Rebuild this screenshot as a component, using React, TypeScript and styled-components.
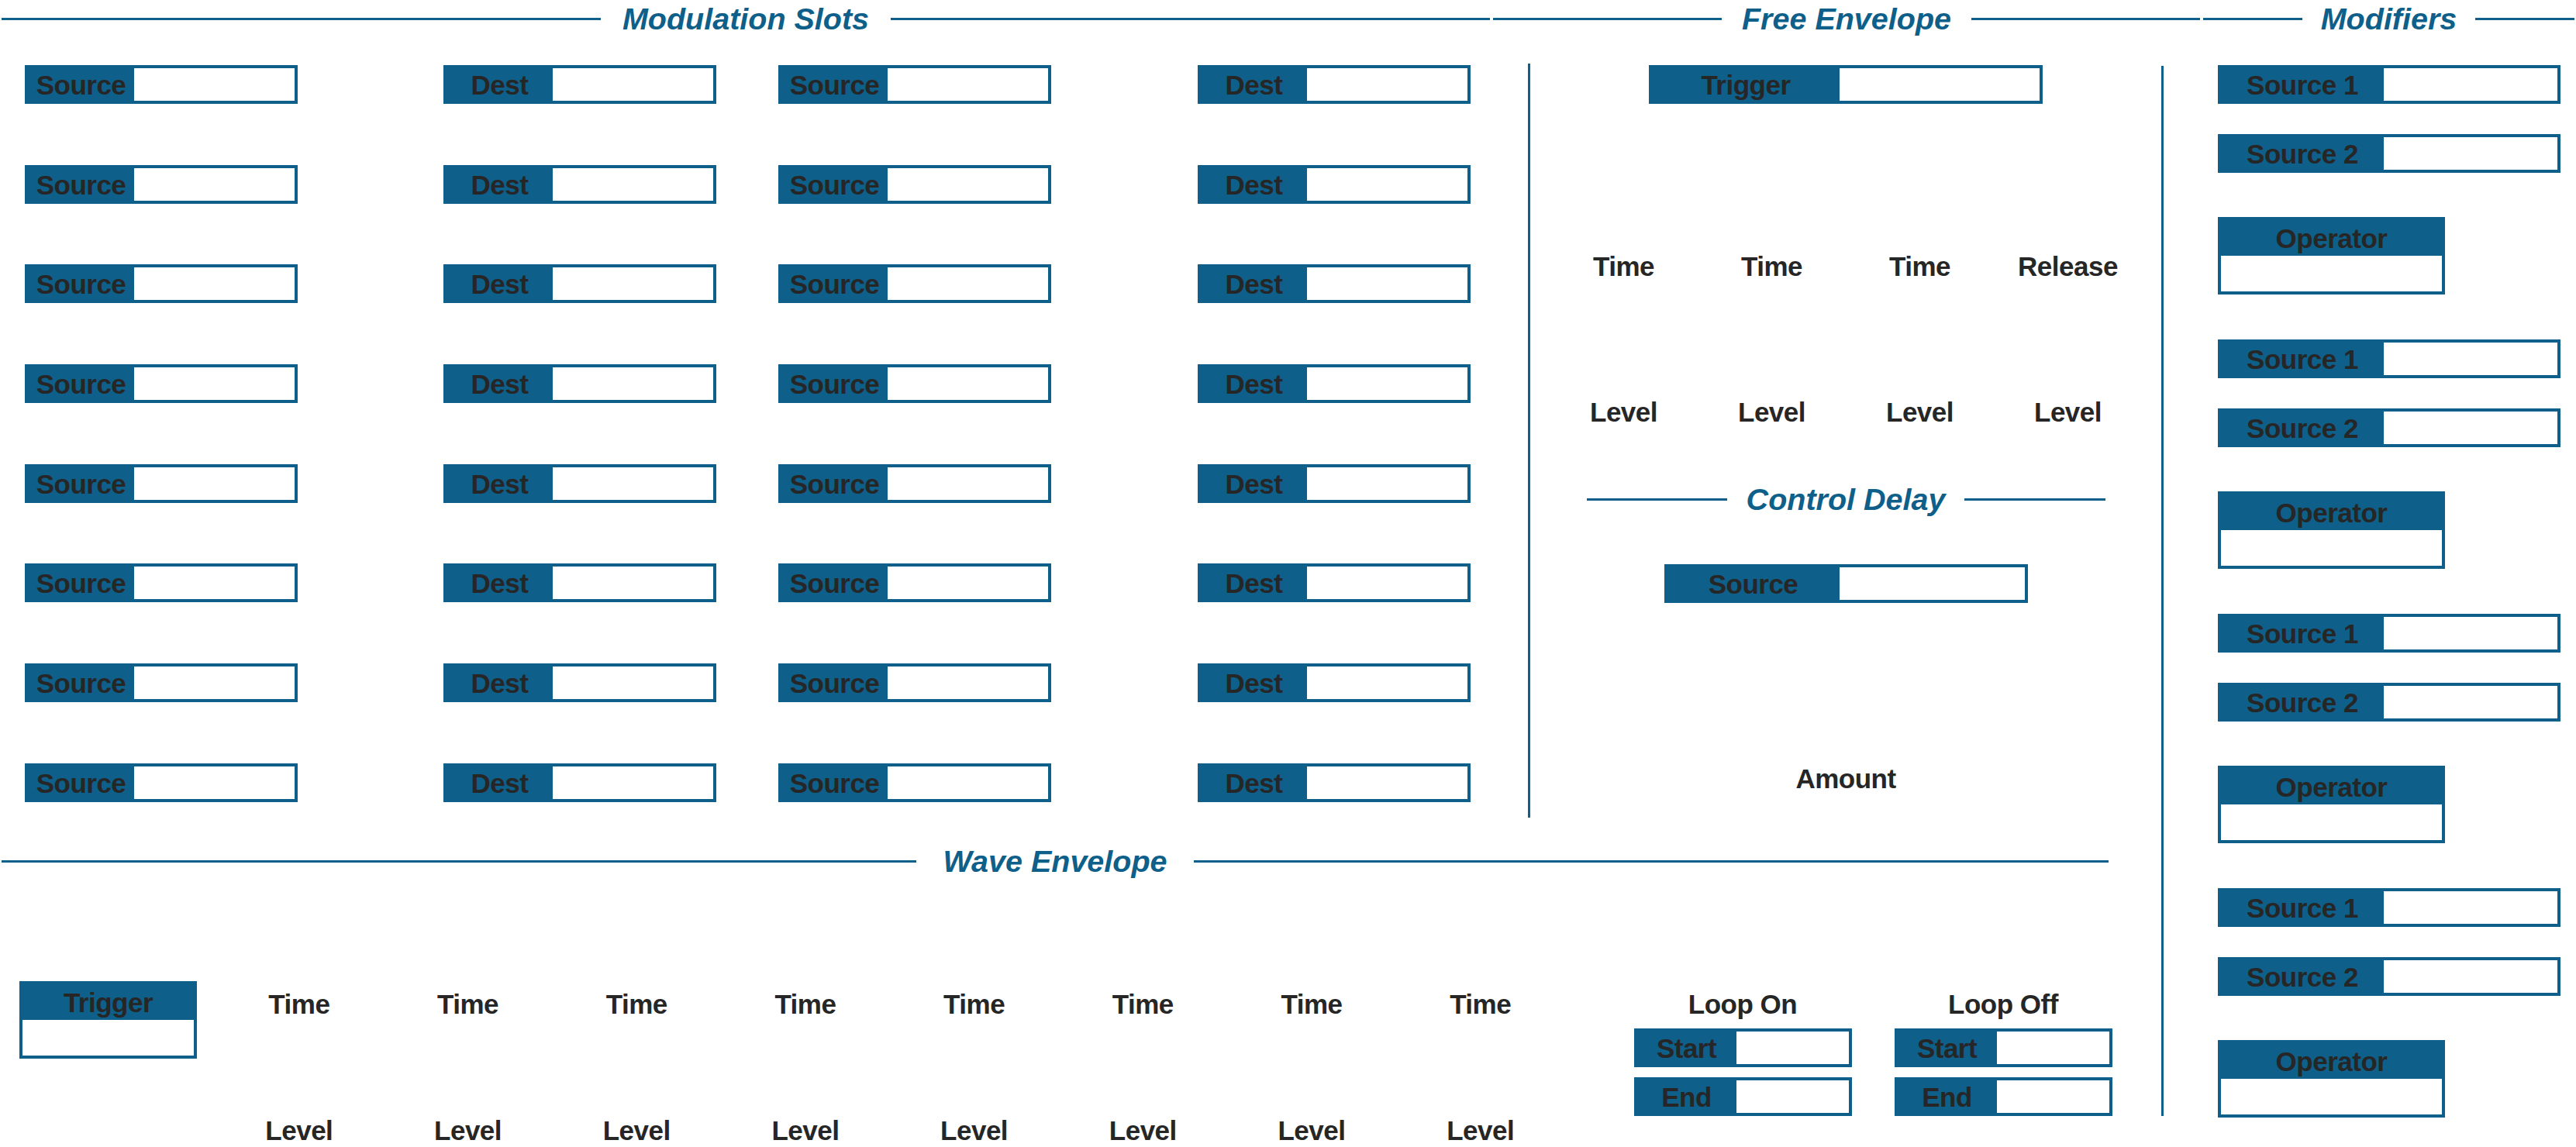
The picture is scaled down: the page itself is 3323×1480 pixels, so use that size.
import React from "react";
import styled, { createGlobalStyle } from "styled-components";

const BLUE = "#0e5f8a";
const INK = "#262626";

const GlobalStyle = createGlobalStyle`
  html, body {
    margin: 0;
    padding: 0;
    background: #fff;
  }
  body {
    font-family: "Liberation Sans", Arial, sans-serif;
  }
`;

const Page = styled.div`
  width: 3323px;
  height: 1480px;
  overflow: hidden;
  background: #fff;
  font-family: "Liberation Sans", Arial, sans-serif;
`;

const HeaderRow = styled.div`
  display: flex;
`;

const Title = styled.div<{ $width: number; $gap: number }>`
  display: flex;
  align-items: center;
  flex-shrink: 0;
  width: ${(p) => p.$width}px;
  height: 48px;
  padding: 0 2px;
  box-sizing: border-box;
  color: ${BLUE};
  font-size: 39.5px;
  font-weight: bold;
  font-style: italic;
  line-height: 48px;
  white-space: nowrap;

  &::before,
  &::after {
    content: "";
    flex: 1;
    height: 3px;
    background: ${BLUE};
  }
  &::before {
    margin-right: ${(p) => p.$gap}px;
  }
  &::after {
    margin-left: ${(p) => p.$gap}px;
  }
`;

const Body = styled.div`
  display: flex;
  align-items: flex-start;
`;

const Main = styled.div`
  width: 2788px;
  flex-shrink: 0;
`;

const Upper = styled.div`
  display: flex;
  height: 1039px;
`;

const VRule = styled.div<{ $top: number; $height: number }>`
  flex-shrink: 0;
  width: 3px;
  margin-top: ${(p) => p.$top}px;
  height: ${(p) => p.$height}px;
  background: ${BLUE};
`;

const SlotGrid = styled.div`
  width: 1971px;
  flex-shrink: 0;
  box-sizing: border-box;
  padding: 36px 0 0 32px;
  display: grid;
  grid-template-columns: 540px 432px 541px 352px;
  row-gap: 78.7px;
  align-content: start;
`;

const Field = styled.div<{ $width: number }>`
  display: flex;
  flex-shrink: 0;
  width: ${(p) => p.$width}px;
  height: 50px;
  border: 4px solid ${BLUE};
  box-sizing: border-box;
  background: #fff;
`;

const FieldLabel = styled.div<{ $width: number }>`
  width: ${(p) => p.$width}px;
  flex-shrink: 0;
  display: flex;
  align-items: center;
  justify-content: center;
  padding-top: 1px;
  box-sizing: border-box;
  background: ${BLUE};
  color: ${INK};
  font-size: 35px;
  font-weight: bold;
  letter-spacing: -0.5px;
  line-height: 1;
  white-space: nowrap;
`;

const Stack = styled.div<{ $width: number }>`
  display: flex;
  flex-direction: column;
  flex-shrink: 0;
  width: ${(p) => p.$width}px;
  height: 100px;
  border: 4px solid ${BLUE};
  box-sizing: border-box;
  background: #fff;
`;

const StackHead = styled.div`
  height: 46px;
  display: flex;
  align-items: center;
  justify-content: center;
  box-sizing: border-box;
  background: ${BLUE};
  color: ${INK};
  font-size: 35px;
  font-weight: bold;
  letter-spacing: -0.5px;
  line-height: 1;
`;

const Caption = styled.div`
  color: ${INK};
  font-size: 35px;
  font-weight: bold;
  letter-spacing: -0.5px;
  line-height: 34px;
  text-align: center;
  white-space: nowrap;
`;

const FreeEnv = styled.div`
  flex: 1;
  display: flex;
  flex-direction: column;
  align-items: center;
  padding-top: 36px;
`;

const EnvGrid = styled.div`
  display: grid;
  grid-template-columns: repeat(4, 191px);
  row-gap: 154px;
  margin-top: 192.5px;
`;

const SubTitle = styled(Title)`
  margin-top: 71.5px;
`;

const DelayField = styled(Field)`
  margin-top: 60px;
`;

const Amount = styled(Caption)`
  margin-top: 209.5px;
`;

const WaveBody = styled.div`
  display: flex;
  align-items: flex-start;
  padding: 131px 0 0 25px;
`;

const TimeGrid = styled.div`
  display: grid;
  grid-template-columns: repeat(8, 217.7px);
  row-gap: 129px;
  margin: 13px 0 0 23px;
`;

const Loops = styled.div`
  display: flex;
  gap: 55px;
  margin: 13px 0 0 89px;
`;

const LoopGroup = styled.div`
  display: flex;
  flex-direction: column;
  align-items: center;
  width: 281px;

  & > :nth-child(2) {
    margin-top: 14px;
  }
  & > :nth-child(3) {
    margin-top: 13px;
  }
`;

const Modifiers = styled.div`
  display: flex;
  flex-direction: column;
  gap: 58px;
  padding: 36px 0 0 70px;
`;

const ModGroup = styled.div`
  display: flex;
  flex-direction: column;
  gap: 57px;
`;

const SourcePair = styled.div`
  display: flex;
  flex-direction: column;
  gap: 39px;
`;

const LabeledField = ({
  label,
  width,
  labelWidth,
}: {
  label: string;
  width: number;
  labelWidth: number;
}) => (
  <Field $width={width}>
    <FieldLabel $width={labelWidth}>{label}</FieldLabel>
  </Field>
);

const slotRows = Array.from({ length: 8 });
const waveSteps = Array.from({ length: 8 });

export default function App() {
  return (
    <Page>
      <GlobalStyle />
      <HeaderRow>
        <Title $width={1924} $gap={28}>
          Modulation Slots
        </Title>
        <Title $width={916} $gap={26}>
          Free Envelope
        </Title>
        <Title $width={483} $gap={24}>
          Modifiers
        </Title>
      </HeaderRow>

      <Body>
        <Main>
          <Upper>
            <SlotGrid>
              {slotRows.map((_, i) => (
                <React.Fragment key={i}>
                  <LabeledField label="Source" width={352} labelWidth={137} />
                  <LabeledField label="Dest" width={352} labelWidth={137} />
                  <LabeledField label="Source" width={352} labelWidth={137} />
                  <LabeledField label="Dest" width={352} labelWidth={137} />
                </React.Fragment>
              ))}
            </SlotGrid>

            <VRule $top={34} $height={973} />

            <FreeEnv>
              <LabeledField label="Trigger" width={508} labelWidth={242} />
              <EnvGrid>
                <Caption>Time</Caption>
                <Caption>Time</Caption>
                <Caption>Time</Caption>
                <Caption>Release</Caption>
                <Caption>Level</Caption>
                <Caption>Level</Caption>
                <Caption>Level</Caption>
                <Caption>Level</Caption>
              </EnvGrid>
              <SubTitle $width={673} $gap={25}>
                Control Delay
              </SubTitle>
              <DelayField $width={469}>
                <FieldLabel $width={222}>Source</FieldLabel>
              </DelayField>
              <Amount>Amount</Amount>
            </FreeEnv>
          </Upper>

          <Title $width={2722} $gap={34}>
            Wave Envelope
          </Title>
          <WaveBody>
            <Stack $width={229}>
              <StackHead>Trigger</StackHead>
            </Stack>
            <TimeGrid>
              {waveSteps.map((_, i) => (
                <Caption key={`t${i}`}>Time</Caption>
              ))}
              {waveSteps.map((_, i) => (
                <Caption key={`l${i}`}>Level</Caption>
              ))}
            </TimeGrid>
            <Loops>
              {["Loop On", "Loop Off"].map((name) => (
                <LoopGroup key={name}>
                  <Caption>{name}</Caption>
                  <LabeledField label="Start" width={281} labelWidth={128} />
                  <LabeledField label="End" width={281} labelWidth={128} />
                </LoopGroup>
              ))}
            </Loops>
          </WaveBody>
        </Main>

        <VRule $top={37} $height={1355} />

        <Modifiers>
          {[0, 1, 2, 3].map((g) => (
            <ModGroup key={g}>
              <SourcePair>
                <LabeledField label="Source 1" width={442} labelWidth={210} />
                <LabeledField label="Source 2" width={442} labelWidth={210} />
              </SourcePair>
              <Stack $width={293}>
                <StackHead>Operator</StackHead>
              </Stack>
            </ModGroup>
          ))}
        </Modifiers>
      </Body>
    </Page>
  );
}
